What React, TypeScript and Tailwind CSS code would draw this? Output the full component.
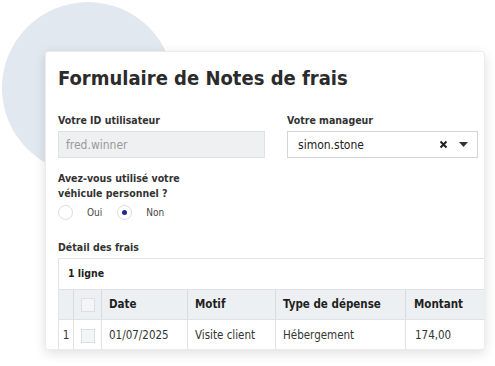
import React from 'react';

const body = "font-['DejaVu_Sans_Condensed',Tahoma,sans-serif]";

function Radio({ checked }: { checked?: boolean }) {
  return (
    <span className="flex h-[15px] w-[15px] items-center justify-center rounded-full border border-[#d9dcdf] bg-white">
      {checked && <span className="h-[5px] w-[5px] rounded-full bg-[#1e2a8c]" />}
    </span>
  );
}

function Checkbox() {
  return <span className="block h-[14px] w-[14px] border border-[#dcdfe2] bg-[#f4f5f6]" />;
}

export default function App() {
  return (
    <div className={`relative h-[366px] w-[495px] overflow-hidden bg-white ${body}`}>
      <div className="absolute left-[2px] top-[2px] h-[172px] w-[172px] rounded-full bg-[#e1e8ef]" />

      <div className="relative ml-[45px] mt-[51px] h-[299px] w-[440px] overflow-hidden rounded-[3px] border border-[#ececec] bg-white pl-[12px] shadow-[0_3px_12px_rgba(0,0,0,0.13)]">
        <h1 className="mt-[11px] text-[20px] font-bold leading-[30px] text-[#2b2b2b]">
          Formulaire de Notes de frais
        </h1>

        <div className="mt-[20px] flex gap-[22px]">
          <div className="w-[207px]">
            <div className="text-[10.5px] font-bold leading-[14px] text-[#333]">Votre ID utilisateur</div>
            <div className="mt-[4px] flex h-[27px] items-center border border-[#dfe2e5] bg-[#eef0f2] px-[7px] text-[12px] text-[#9a9a9a]">
              fred.winner
            </div>
          </div>
          <div className="w-[191px]">
            <div className="text-[10.5px] font-bold leading-[14px] text-[#333]">Votre manageur</div>
            <div className="mt-[4px] flex h-[27px] items-center border border-[#d3d6d9] bg-white pl-[10px] pr-[9px] text-[12px] text-[#222]">
              <span className="flex-1">simon.stone</span>
              <svg width="9" height="9" viewBox="0 0 9 9" className="mr-[11px]">
                <path d="M1.5 1.5L7.5 7.5M7.5 1.5L1.5 7.5" stroke="#222" strokeWidth="2" />
              </svg>
              <svg width="9" height="5" viewBox="0 0 9 5">
                <path d="M0 0H9L4.5 5Z" fill="#333" />
              </svg>
            </div>
          </div>
        </div>

        <div className="mt-[13px] text-[10.5px] font-bold leading-[15px] text-[#333]">
          <div>Avez-vous utilisé votre</div>
          <div>véhicule personnel ?</div>
        </div>
        <div className="mt-[4px] flex items-center text-[10px] text-[#444]">
          <Radio />
          <span className="ml-[14px]">Oui</span>
          <span className="ml-[15px]"><Radio checked /></span>
          <span className="ml-[14px]">Non</span>
        </div>

        <div className="mt-[20px] text-[10.5px] font-bold leading-[14px] text-[#333]">Détail des frais</div>

        <div className="mt-[4px] w-[460px] border border-[#e2e4e6] text-[11.5px]">
          <div className="flex h-[30px] items-center pl-[9px] text-[10.5px] font-bold text-[#222]">1 ligne</div>
          <div className="flex h-[30px] border-t border-[#dfe2e4] bg-[#edf0f2] font-bold text-[#1f1f1f]">
            <div className="w-[15px] border-r border-[#d8dbde]" />
            <div className="flex w-[28px] items-center justify-center border-r border-[#d8dbde]">
              <Checkbox />
            </div>
            <div className="flex w-[86px] items-center border-r border-[#d8dbde] pl-[7px]">Date</div>
            <div className="flex w-[88px] items-center border-r border-[#d8dbde] pl-[7px]">Motif</div>
            <div className="flex w-[130px] items-center border-r border-[#d8dbde] pl-[7px]">Type de dépense</div>
            <div className="flex flex-1 items-center border-r border-[#d8dbde] pl-[8px]">Montant</div>
          </div>
          <div className="flex h-[32px] border-t border-[#dfe2e4] text-[#333]">
            <div className="flex w-[15px] items-center justify-center border-r border-[#e0e2e4]">1</div>
            <div className="flex w-[28px] items-center justify-center border-r border-[#e0e2e4]">
              <Checkbox />
            </div>
            <div className="flex w-[86px] items-center border-r border-[#e0e2e4] pl-[7px]">01/07/2025</div>
            <div className="flex w-[88px] items-center border-r border-[#e0e2e4] pl-[7px]">Visite client</div>
            <div className="flex w-[130px] items-center border-r border-[#e0e2e4] pl-[7px]">Hébergement</div>
            <div className="flex flex-1 items-center border-r border-[#e0e2e4] pl-[9px]">174,00</div>
          </div>
        </div>
      </div>
    </div>
  );
}
